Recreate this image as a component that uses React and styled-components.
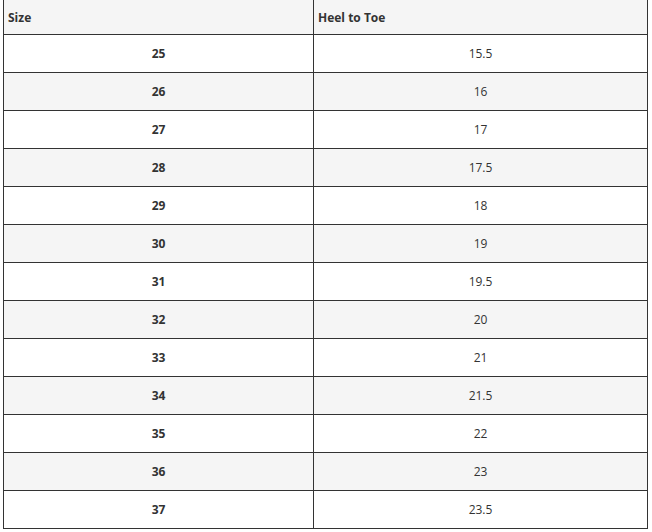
import React from "react";
import styled, {createGlobalStyle} from "styled-components";

const GlobalStyle = createGlobalStyle`
  html, body {
    margin: 0;
    padding: 0;
    background: #fff;
  }
  body {
    font-family: "Open Sans", "Liberation Sans", Arial, sans-serif;
    color: #333;
  }
`;

const Table = styled.table`
  border-collapse: separate;
  border-spacing: 0;
  table-layout: fixed;
  width: 645px;
  margin-left: 3px;
  border-left: 1px solid #333;
  font-size: 12px;
`;

const HeadCell = styled.th`
  box-sizing: border-box;
  height: 35px;
  padding: 0 0 0 4px;
  text-align: left;
  font-weight: 700;
  background: #f5f5f5;
  border-right: 1px solid #333;
  border-bottom: 1px solid #333;
`;

const Row = styled.tr`
  background: ${(props) => (props.$shaded ? "#f5f5f5" : "#fff")};
`;

const Cell = styled.td`
  box-sizing: border-box;
  height: 38px;
  padding: 0;
  text-align: center;
  font-weight: ${(props) => (props.$bold ? 700 : 400)};
  border-right: 1px solid #333;
  border-bottom: 1px solid #333;
`;

const sizes = [
  ["25", "15.5"],
  ["26", "16"],
  ["27", "17"],
  ["28", "17.5"],
  ["29", "18"],
  ["30", "19"],
  ["31", "19.5"],
  ["32", "20"],
  ["33", "21"],
  ["34", "21.5"],
  ["35", "22"],
  ["36", "23"],
  ["37", "23.5"],
];

const App = () => {
  return (
    <>
      <GlobalStyle />
      <Table>
        <colgroup>
          <col style={{width: 310}} />
          <col style={{width: 334}} />
        </colgroup>
        <thead>
          <tr>
            <HeadCell>Size</HeadCell>
            <HeadCell>Heel to Toe</HeadCell>
          </tr>
        </thead>
        <tbody>
          {sizes.map(([size, length], i) => (
            <Row key={size} $shaded={i % 2 === 1}>
              <Cell $bold>{size}</Cell>
              <Cell>{length}</Cell>
            </Row>
          ))}
        </tbody>
      </Table>
    </>
  );
};

export default App;
